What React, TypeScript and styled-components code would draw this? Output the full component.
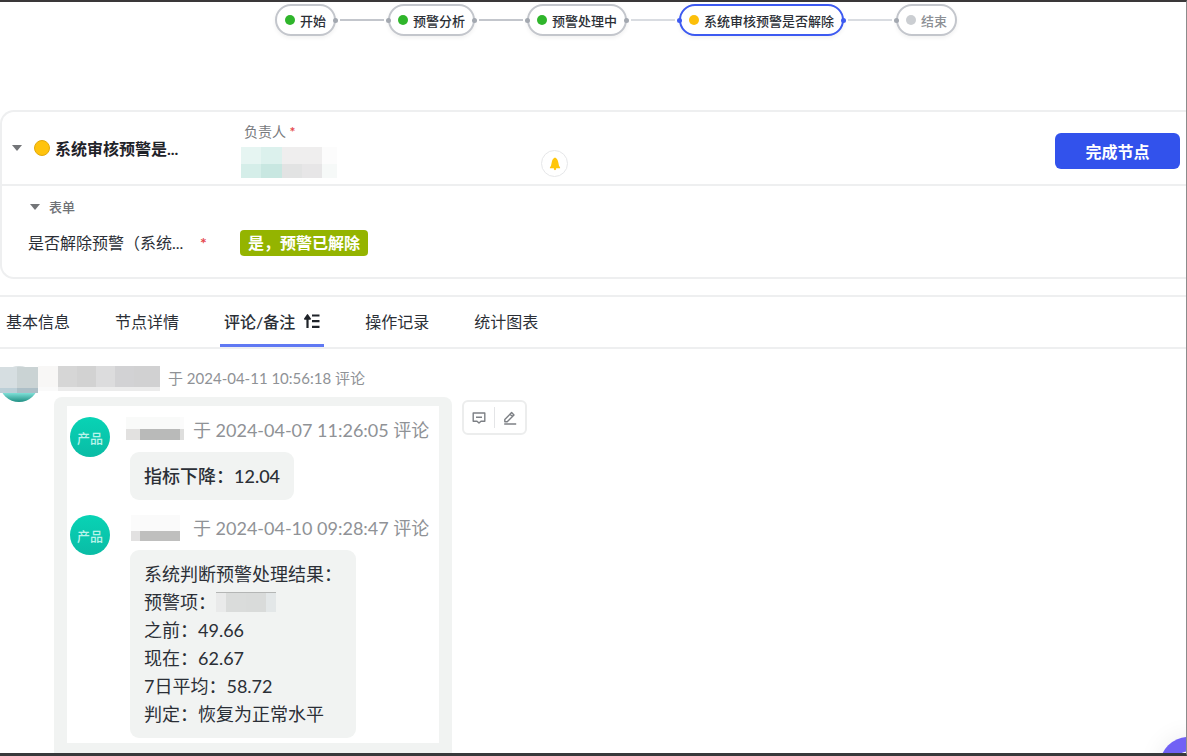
import React from "react";
import styled, { createGlobalStyle } from "styled-components";

const GlobalStyle = createGlobalStyle`
  *, *::before, *::after { box-sizing: border-box; }
  body {
    margin: 0;
    background: #fff;
    font-family: Lato, "Noto Sans CJK SC", sans-serif;
    color: #2b2f36;
  }
  button { font-family: inherit; cursor: pointer; }
`;

const Frame = styled.div`
  position: relative;
  display: flex;
  flex-direction: column;
  height: 100vh;
  overflow: hidden;
  border-top: 2px solid #3a3839;
  border-right: 1px solid #8c8c8c;
  border-bottom: 3px solid #38393b;
  background: #fff;
`;

/* ---------- workflow ---------- */

const Flow = styled.ol`
  display: flex;
  flex: none;
  align-items: flex-start;
  list-style: none;
  margin: 0;
  padding: 2px 0 0 275px;
  height: 108px;
`;

const FlowItem = styled.li`
  display: flex;
  align-items: center;
`;

type NodeState = "done" | "active" | "todo";

const nodeDot = { done: "#2fb52b", active: "#fcbf0a", todo: "#cbced2" };
const nodeRing = { done: "#c3c6cc", active: "#3d5af1", todo: "#c3c6cc" };

const Node = styled.button<{ $state: NodeState }>`
  display: flex;
  align-items: center;
  gap: 5px;
  height: 32px;
  padding: 0 8px;
  border: 2px solid ${(p) => nodeRing[p.$state]};
  border-radius: 16px;
  background: #fff;
  box-shadow: 0 2px 4px rgba(0, 0, 0, 0.06);
  font-size: 13px;
  font-weight: 500;
  white-space: nowrap;
  color: ${(p) => (p.$state === "todo" ? "#8d9095" : "#2b2f36")};
`;

const Dot = styled.span<{ $state: NodeState }>`
  width: 10px;
  height: 10px;
  border-radius: 50%;
  background: ${(p) => nodeDot[p.$state]};
`;

const Connector = styled.span<{ $from?: boolean; $to?: boolean }>`
  display: flex;
  align-items: center;
  gap: 2px;
  width: 58px;
  margin: 0 -3px;
  z-index: 1;
  &::before,
  &::after {
    content: "";
    width: 5px;
    height: 5px;
    border-radius: 50%;
    background: ${(p) => (p.$from ? "#3d5af1" : "#a3a8b0")};
  }
  &::after {
    background: ${(p) => (p.$to ? "#3d5af1" : "#a3a8b0")};
  }
`;

const Line = styled.span<{ $light: boolean }>`
  flex: 1;
  height: 2px;
  background: ${(p) => (p.$light ? "#d9dce1" : "#c3c6cc")};
`;

/* ---------- node card ---------- */

const Card = styled.section`
  flex: none;
  border: 2px solid #eeeff0;
  border-right: 0;
  border-radius: 14px 0 0 14px;
`;

const CardHead = styled.header`
  display: grid;
  grid-template-columns: 239px 300px 1fr auto;
  height: 74px;
  padding-right: 6px;
  border-bottom: 2px solid #eeeff0;
`;

const Title = styled.h2`
  display: flex;
  align-items: center;
  gap: 12px;
  margin: 0;
  padding-left: 10px;
  font-size: 16px;
  font-weight: 700;
  color: #1f2329;
`;

const TitleText = styled.span`
  display: flex;
  align-items: center;
  gap: 5px;
  white-space: nowrap;
`;

const StatusDot = styled.i`
  width: 16px;
  height: 16px;
  border: 1px solid #e2a90c;
  border-radius: 50%;
  background: #ffc30d;
`;

const Caret = styled.i`
  width: 10px;
  border: 5px solid transparent;
  border-top: 6px solid #737578;
  border-bottom: 0;
`;

const Owner = styled.div`
  display: flex;
  flex-direction: column;
  gap: 5px;
  padding-top: 10px;
`;

const OwnerLabel = styled.span`
  padding-left: 3px;
  font-size: 14px;
  line-height: 20px;
  color: #77797d;
`;

const Star = styled.em`
  font-style: normal;
  font-weight: 700;
  color: #e5484d;
`;

const Mosaic = styled.div<{ $w: number; $h: number; $cols: string; $rows: string }>`
  display: grid;
  flex: none;
  width: ${(p) => p.$w}px;
  height: ${(p) => p.$h}px;
  grid-template-columns: ${(p) => p.$cols};
  grid-template-rows: ${(p) => p.$rows};
`;

const Cell = styled.i<{ $c: string }>`
  background: ${(p) => p.$c};
`;

const BellButton = styled.button`
  display: grid;
  place-items: center;
  width: 27px;
  height: 27px;
  margin-top: 38px;
  padding: 0;
  border: 1px solid #e6e7e9;
  border-radius: 50%;
  background: #fff;
`;

const Primary = styled.button`
  align-self: end;
  width: 125px;
  height: 36px;
  margin-bottom: 15px;
  border: 0;
  border-radius: 6px;
  background: #3252ec;
  color: #fff;
  font-size: 16px;
  font-weight: 700;
`;

const CardBody = styled.div`
  display: flex;
  flex-direction: column;
  gap: 11px;
  padding: 9px 0 21px 26px;
`;

const GroupTitle = styled.h3`
  display: flex;
  align-items: center;
  gap: 9px;
  margin: 0;
  padding-left: 2px;
  font-size: 13px;
  font-weight: 500;
  line-height: 24px;
  color: #6f7276;
`;

const Field = styled.div`
  display: grid;
  grid-template-columns: 172px 40px auto;
  align-items: center;
  justify-content: start;
  font-size: 16px;
  line-height: 26px;
  white-space: nowrap;
`;

const Tag = styled.span`
  padding: 0 8px;
  border-radius: 4px;
  background: #94b400;
  color: #fff;
  font-weight: 700;
`;

/* ---------- tabs ---------- */

const Tabs = styled.nav`
  display: flex;
  flex: none;
  gap: 37px;
  height: 54px;
  margin-top: 16px;
  padding: 0 2px;
  border-top: 2px solid #eeeff0;
  border-bottom: 2px solid #eeeff0;
`;

const Tab = styled.button<{ $active?: boolean }>`
  display: flex;
  align-items: center;
  gap: 8px;
  padding: 1px 4px 0;
  border: 0;
  border-bottom: 3px solid ${(p) => (p.$active ? "#6079f3" : "transparent")};
  background: none;
  font-size: 16px;
  font-weight: ${(p) => (p.$active ? 500 : 400)};
  color: #2b2f36;
  white-space: nowrap;
`;

/* ---------- comments ---------- */

const Thread = styled.main`
  display: flex;
  flex: none;
  flex-direction: column;
  padding-top: 17px;
`;

const ThreadHead = styled.div`
  display: flex;
  align-items: flex-start;
  height: 31px;
`;

const OuterAvatar = styled.div`
  flex: none;
  width: 38px;
  height: 36px;
  border-radius: 50%;
  background: linear-gradient(#d4dcde 60%, #7fe0d8 75%, #1f8f83 100%);
`;

const AvatarCover = styled(Mosaic)`
  margin-top: 1px;
`;

const Meta = styled.span<{ $large?: boolean }>`
  font-size: ${(p) => (p.$large ? 18 : 15)}px;
  line-height: ${(p) => (p.$large ? 26 : 24)}px;
  color: #8f9296;
  white-space: nowrap;
`;

const HeadMeta = styled(Meta)`
  margin-left: 8px;
`;

const ThreadBody = styled.div`
  display: flex;
  align-items: flex-start;
  gap: 10px;
  padding-left: 54px;
`;

const Quote = styled.article`
  width: 398px;
  padding: 9px 13px 20px;
  border-radius: 8px 8px 0 0;
  background: #f1f3f2;
`;

const QuoteInner = styled.div`
  display: flex;
  flex-direction: column;
  gap: 15px;
  padding: 11px 0 5px 3px;
  background: #fff;
`;

const Comment = styled.div`
  display: grid;
  grid-template-columns: 56px 1fr;
`;

const Avatar = styled.span`
  display: grid;
  place-items: center;
  width: 40px;
  height: 40px;
  border-radius: 50%;
  background: linear-gradient(#08d3b5, #0abca5);
  color: #b9f3ea;
  font-size: 13px;
  font-weight: 500;
`;

const CommentHead = styled.div`
  display: flex;
  gap: 9px;
  height: 35px;
`;

const Bubble = styled.div<{ $strong?: boolean }>`
  width: fit-content;
  margin-left: 4px;
  padding: 10px 14px;
  border-radius: 9px;
  background: #f1f3f2;
  font-size: 18px;
  font-weight: ${(p) => (p.$strong ? 500 : 400)};
  line-height: 28px;
`;

const Row = styled.p`
  display: flex;
  align-items: center;
  margin: 0;
  white-space: nowrap;
`;

const Actions = styled.div`
  display: flex;
  align-items: center;
  width: 65px;
  height: 35px;
  margin-top: 3px;
  border: 2px solid #eceded;
  border-radius: 6px;
`;

const IconButton = styled.button`
  display: grid;
  flex: 1;
  place-items: center;
  height: 21px;
  padding: 0;
  border: 0;
  background: none;
  color: #7d8085;
  & + & {
    border-left: 1px solid #e4e5e7;
  }
`;

const Fab = styled.button`
  position: absolute;
  right: -30px;
  bottom: -40px;
  width: 56px;
  height: 56px;
  border: 0;
  border-radius: 50%;
  background: radial-gradient(circle, #fff 13px, #7161f5 14px);
  box-shadow: 0 0 24px rgba(0, 0, 0, 0.08);
`;

const nodes: { label: string; state: NodeState }[] = [
  { label: "开始", state: "done" },
  { label: "预警分析", state: "done" },
  { label: "预警处理中", state: "done" },
  { label: "系统审核预警是否解除", state: "active" },
  { label: "结束", state: "todo" },
];

const tabs = ["基本信息", "节点详情", "评论/备注", "操作记录", "统计图表"];

function Blocks({ w, h, cols, rows = "1fr", colors }: { w: number; h: number; cols: string; rows?: string; colors: string[] }) {
  return (
    <Mosaic $w={w} $h={h} $cols={cols} $rows={rows} aria-hidden>
      {colors.map((c, i) => (
        <Cell key={i} $c={c} />
      ))}
    </Mosaic>
  );
}

function SortIcon() {
  return (
    <svg width="17" height="16" viewBox="0 0 17 16" fill="none" stroke="#1f2329" strokeWidth="2.2">
      <path d="M4.500 15V4M9 2.500h7.500M9 8.200h7.500M9 13.900h7.500" />
      <path d="M4.500 1.800 7.300 6H1.700Z" fill="#1f2329" strokeWidth="1.4" strokeLinejoin="round" />
    </svg>
  );
}

export default function App() {
  return (
    <>
      <GlobalStyle />
      <Frame>
        <Flow>
          {nodes.map((n, i) => (
            <FlowItem key={n.label}>
              {i > 0 && (
                <Connector $from={nodes[i - 1].state === "active"} $to={n.state === "active"}>
                  <Line $light={i > 2} />
                </Connector>
              )}
              <Node $state={n.state}>
                <Dot $state={n.state} />
                {n.label}
              </Node>
            </FlowItem>
          ))}
        </Flow>

        <Card>
          <CardHead>
            <Title>
              <Caret />
              <TitleText>
                <StatusDot />
                系统审核预警是...
              </TitleText>
            </Title>
            <Owner>
              <OwnerLabel>
                负责人 <Star>*</Star>
              </OwnerLabel>
              <Blocks
                w={96}
                h={31}
                cols="20px 21px 20px 20px 15px"
                rows="17px 14px"
                colors={["#e6f5f2", "#dcf1ed", "#efeeee", "#efeeee", "#fcfcfc", "#d5eee9", "#c8e7e1", "#e2e3e3", "#e7e6e7", "#f6f9f8"]}
              />
            </Owner>
            <BellButton aria-label="提醒">
              <svg width="12" height="14" viewBox="0 0 12 14" fill="#ffc60a">
                <path d="M6 .5C4.200 1.100 3.200 2.800 2.800 5L2 8.800.9 10.600v.6h10.200v-.6L10 8.800 9.200 5C8.800 2.800 7.800 1.100 6 .5ZM4.900 11.200h2.200v1.200L6 13.200l-1.100-.8Z" />
              </svg>
            </BellButton>
            <Primary>完成节点</Primary>
          </CardHead>
          <CardBody>
            <GroupTitle>
              <Caret />
              表单
            </GroupTitle>
            <Field>
              <span>是否解除预警（系统...</span>
              <Star>*</Star>
              <Tag>是，预警已解除</Tag>
            </Field>
          </CardBody>
        </Card>

        <Tabs>
          {tabs.map((t, i) => (
            <Tab key={t} $active={i === 2}>
              {t}
              {i === 2 && <SortIcon />}
            </Tab>
          ))}
        </Tabs>

        <Thread>
          <ThreadHead>
            <OuterAvatar>
              <AvatarCover $w={38} $h={26} $cols="17px 21px" $rows="21px 5px">
                <Cell $c="#d6dee1" />
                <Cell $c="#cad3d4" />
                <Cell $c="#bccfd7" />
                <Cell $c="#adbfc7" />
              </AvatarCover>
            </OuterAvatar>
            <Blocks
              w={122}
              h={25}
              cols="20px 19px 19px 19px 19px 26px"
              rows="21px 4px"
              colors={["#f8f7f6", "#d6d6d6", "#d2d2d2", "#dcdcdd", "#d2d2d4", "#d1d1d2", "#fafafa", "#ececec", "#ececec", "#ececec", "#ececec", "#ececec"]}
            />
            <HeadMeta>于 2024-04-11 10:56:18 评论</HeadMeta>
          </ThreadHead>
          <ThreadBody>
            <Quote>
              <QuoteInner>
                <Comment>
                  <Avatar>产品</Avatar>
                  <div>
                    <CommentHead>
                      <Blocks
                        w={58}
                        h={23}
                        cols="14px 40px 4px"
                        rows="12px 11px"
                        colors={["#f9faf9", "#f9faf9", "#fbfbfb", "#e2e1e0", "#b9bab9", "#dededd"]}
                      />
                      <Meta $large>于 2024-04-07 11:26:05 评论</Meta>
                    </CommentHead>
                    <Bubble $strong>
                      <Row>指标下降：12.04</Row>
                    </Bubble>
                  </div>
                </Comment>
                <Comment>
                  <Avatar>产品</Avatar>
                  <div>
                    <CommentHead>
                      <Blocks
                        w={58}
                        h={26}
                        cols="5px 9px 40px 4px"
                        rows="16px 10px"
                        colors={["#fff", "#fbfbfb", "#fafafa", "#fff", "#fff", "#e2e1e1", "#bfbfbe", "#fff"]}
                      />
                      <Meta $large>于 2024-04-10 09:28:47 评论</Meta>
                    </CommentHead>
                    <Bubble>
                      <Row>系统判断预警处理结果：</Row>
                      <Row>
                        预警项：
                        <Blocks
                          w={60}
                          h={20}
                          cols="10px 20px 20px 10px"
                          rows="1px 19px"
                          colors={["#b4b6b5", "#b4b6b5", "#b4b6b5", "#b4b6b5", "#e9eaea", "#dadcdb", "#d9dbda", "#e3e7e8"]}
                        />
                      </Row>
                      <Row>之前：49.66</Row>
                      <Row>现在：62.67</Row>
                      <Row>7日平均：58.72</Row>
                      <Row>判定：恢复为正常水平</Row>
                    </Bubble>
                  </div>
                </Comment>
              </QuoteInner>
            </Quote>
            <Actions>
              <IconButton aria-label="回复">
                <svg width="14" height="14" viewBox="0 0 14 14" fill="none" stroke="currentColor" strokeWidth="1.4" strokeLinejoin="round">
                  <path d="M1.200 2h11.600v8.200H9L7 12l-2-1.800H1.200ZM4 6.200h6" />
                </svg>
              </IconButton>
              <IconButton aria-label="编辑">
                <svg width="14" height="14" viewBox="0 0 14 14" fill="none" stroke="currentColor" strokeWidth="1.4" strokeLinejoin="round">
                  <path d="M1.800 10.800V8.400L8.600 1.600 11 4l-6.800 6.800ZM7 3.200l2.400 2.400M1.200 13h12" />
                </svg>
              </IconButton>
            </Actions>
          </ThreadBody>
        </Thread>

        <Fab aria-label="帮助" />
      </Frame>
    </>
  );
}
